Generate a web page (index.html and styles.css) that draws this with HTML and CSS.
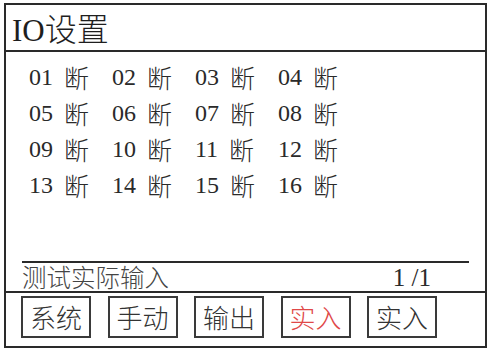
FILE: index.html
```html
<!DOCTYPE html>
<html lang="zh">
<head>
<meta charset="utf-8">
<link rel="stylesheet" href="styles.css">
</head>
<body>
<div class="screen">
  <div class="header"><span class="latin">IO</span>设置</div>
  <div class="content">
    <div class="grid">
      <div class="cell"><span class="num">01</span><span class="st">断</span></div>
      <div class="cell"><span class="num">02</span><span class="st">断</span></div>
      <div class="cell"><span class="num">03</span><span class="st">断</span></div>
      <div class="cell"><span class="num">04</span><span class="st">断</span></div>
      <div class="cell"><span class="num">05</span><span class="st">断</span></div>
      <div class="cell"><span class="num">06</span><span class="st">断</span></div>
      <div class="cell"><span class="num">07</span><span class="st">断</span></div>
      <div class="cell"><span class="num">08</span><span class="st">断</span></div>
      <div class="cell"><span class="num">09</span><span class="st">断</span></div>
      <div class="cell"><span class="num">10</span><span class="st">断</span></div>
      <div class="cell"><span class="num">11</span><span class="st">断</span></div>
      <div class="cell"><span class="num">12</span><span class="st">断</span></div>
      <div class="cell"><span class="num">13</span><span class="st">断</span></div>
      <div class="cell"><span class="num">14</span><span class="st">断</span></div>
      <div class="cell"><span class="num">15</span><span class="st">断</span></div>
      <div class="cell"><span class="num">16</span><span class="st">断</span></div>
    </div>
    <div class="status">
      <span class="status-text">测试实际输入</span>
      <span class="page">1 /1</span>
    </div>
  </div>
  <div class="footer">
    <div class="btn">系统</div>
    <div class="btn">手动</div>
    <div class="btn">输出</div>
    <div class="btn active">实入</div>
    <div class="btn">实入</div>
  </div>
</div>
</body>
</html>
```

FILE: styles.css
```css
html, body {
  margin: 0;
  padding: 0;
  background: #ffffff;
}

body {
  font-family: "Liberation Serif", "Noto Sans CJK SC", serif;
  color: #222222;
}

.screen {
  box-sizing: border-box;
  margin: 3px 0 0 4px;
  width: 483px;
  height: 345px;
  border: 2px solid #2a2a2a;
  display: flex;
  flex-direction: column;
}

.header {
  box-sizing: border-box;
  height: 47px;
  border-bottom: 2px solid #2a2a2a;
  padding: 4px 0 0 6px;
  font-family: "Noto Sans CJK SC", sans-serif;
  font-weight: 300;
  font-size: 32px;
  line-height: 36px;
  color: #1e1e1e;
}

.latin {
  font-family: "Liberation Serif", serif;
  font-weight: 400;
  font-size: 31px;
}

.content {
  flex: 1;
  display: flex;
  flex-direction: column;
  padding: 0 16px 0 16px;
}

.grid {
  display: grid;
  grid-template-columns: repeat(4, 83px);
  grid-auto-rows: 36px;
  padding: 7px 0 0 7px;
  flex: 1;
}

.cell {
  display: flex;
  align-items: center;
  gap: 11px;
}

.num {
  font-family: "Liberation Serif", serif;
  font-size: 24px;
  color: #2a2a2a;
}

.st {
  font-family: "Noto Sans CJK SC", sans-serif;
  font-weight: 300;
  font-size: 25px;
  color: #2a2a2a;
}

.status {
  display: flex;
  justify-content: space-between;
  align-items: flex-end;
  border-top: 2px solid #2a2a2a;
  height: 28px;
  padding-right: 38px;
}

.status-text {
  font-family: "Noto Sans CJK SC", sans-serif;
  font-weight: 300;
  font-size: 24.5px;
  line-height: 28px;
  color: #444444;
}

.page {
  font-family: "Liberation Serif", serif;
  font-size: 25px;
  line-height: 26px;
  color: #2a2a2a;
}

.footer {
  box-sizing: border-box;
  height: 55px;
  border-top: 2px solid #2a2a2a;
  display: flex;
  gap: 16.5px;
  padding: 3px 0 0 15px;
}

.btn {
  box-sizing: border-box;
  width: 70px;
  height: 42px;
  border: 2px solid #3a3a3a;
  font-family: "Noto Sans CJK SC", sans-serif;
  font-weight: 300;
  font-size: 26px;
  line-height: 38px;
  text-align: center;
  color: #333333;
}

.btn.active {
  color: #e04848;
}
```
